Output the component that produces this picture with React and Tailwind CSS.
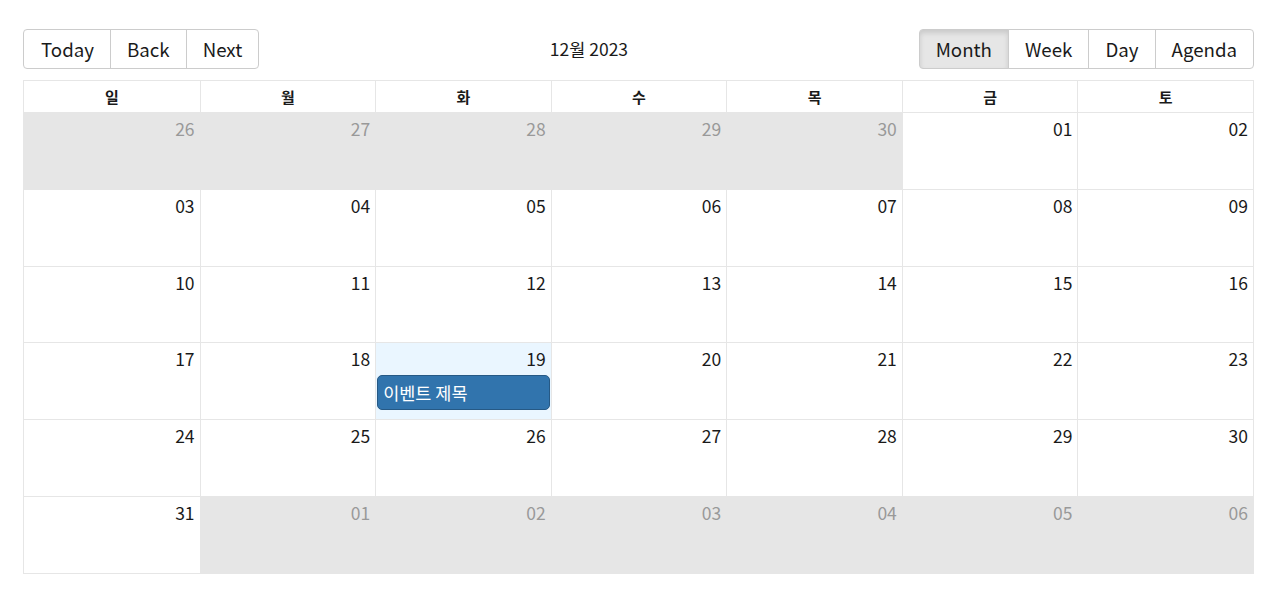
import React from "react";

const DAYS = ["일", "월", "화", "수", "목", "금", "토"];

// six weeks of December 2023, with leading/trailing days of other months
const WEEKS = [
  [["26", true], ["27", true], ["28", true], ["29", true], ["30", true], ["01"], ["02"]],
  [["03"], ["04"], ["05"], ["06"], ["07"], ["08"], ["09"]],
  [["10"], ["11"], ["12"], ["13"], ["14"], ["15"], ["16"]],
  [["17"], ["18"], ["19"], ["20"], ["21"], ["22"], ["23"]],
  [["24"], ["25"], ["26"], ["27"], ["28"], ["29"], ["30"]],
  [["31"], ["01", true], ["02", true], ["03", true], ["04", true], ["05", true], ["06", true]],
];

const btn = "px-4 py-[6px] border border-[#ccc] text-[#1a1a1a] leading-[26px] -ml-px first:ml-0";

const App = () => {
  return (
    <div
      className="h-[606px] bg-white pt-[29px] px-[23px] text-[#1a1a1a]"
      style={{ fontFamily: '"Noto Sans CJK KR", "Noto Sans", sans-serif' }}
    >
      <div className="w-[1231px]">
        {/* Toolbar */}
        <div className="flex items-center mb-[11px] text-[18.7px]">
          <div className="flex">
            <button className={`${btn} rounded-l-[4px] pl-[17px]`}>Today</button>
            <button className={btn}>Back</button>
            <button className={`${btn} rounded-r-[4px]`}>Next</button>
          </div>
          <div className="flex-1 text-center text-[17.5px]">12월 2023</div>
          <div className="flex">
            <button className={`${btn} rounded-l-[4px] bg-[#e6e6e6] border-[#adadad] shadow-[inset_0_3px_5px_rgba(0,0,0,0.125)] relative z-10`}>
              Month
            </button>
            <button className={btn}>Week</button>
            <button className={btn}>Day</button>
            <button className={`${btn} rounded-r-[4px]`}>Agenda</button>
          </div>
        </div>

        {/* Month view */}
        <div className="border border-[#e6e6e6] h-[494px] flex flex-col">
          <div className="grid grid-cols-7 h-[32px] border-b border-[#e6e6e6]">
            {DAYS.map((d, i) => (
              <div
                key={d}
                className={`text-center font-bold text-[15px] leading-[31px] ${i > 0 ? "border-l border-[#e6e6e6]" : ""}`}
              >
                {d}
              </div>
            ))}
          </div>
          {WEEKS.map((week, w) => (
            <div
              key={w}
              className={`flex-1 grid grid-cols-7 ${w > 0 ? "border-t border-[#e6e6e6]" : ""}`}
            >
              {week.map(([num, off], i) => {
                const today = w === 3 && i === 2;
                return (
                  <div
                    key={i}
                    className={`flex flex-col ${i > 0 ? "border-l border-[#e6e6e6]" : ""} ${
                      off ? "bg-[#e6e6e6]" : today ? "bg-[#eaf6ff]" : ""
                    }`}
                  >
                    <div
                      className={`text-right pr-[5px] pt-[3px] text-[17.5px] leading-[26px] ${
                        off ? "text-[#999]" : "text-[#1a1a1a]"
                      }`}
                    >
                      {num}
                    </div>
                    {today && (
                      <div className="mx-px mt-[3px] h-[35px] rounded-[5px] bg-[#3174ad] border border-[#265985] text-white text-[17.5px] leading-[33px] pl-[5px]">
                        이벤트 제목
                      </div>
                    )}
                  </div>
                );
              })}
            </div>
          ))}
        </div>
      </div>
    </div>
  );
};

export default App;
